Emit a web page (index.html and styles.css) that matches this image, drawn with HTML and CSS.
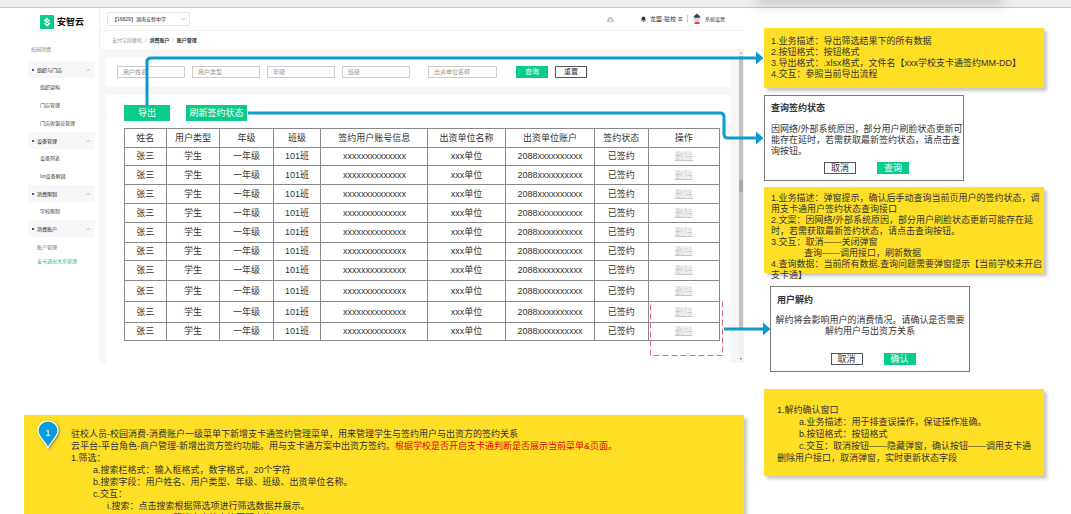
FILE: index.html
```html
<!DOCTYPE html>
<html lang="zh-CN">
<head>
<meta charset="utf-8">
<title>支卡通签约管理</title>
<link rel="stylesheet" href="styles.css">
</head>
<body>
<div class="topbar"><div class="topbar-float"></div></div>
<main class="canvas">
  <div class="left">
    <section class="app">
      <aside class="sidebar">
        <div class="brand">
          <svg class="brand-logo" viewBox="0 0 14 14"><rect width="14" height="14" rx="1" fill="#07cc8a"/><path d="M7.600 3 4.600 5.400 7.400 7.600M6.400 11.200l3-2.600L6.600 6.200M7.200 4.600l2.400 1.200M6.800 9.600 4.400 8.400" fill="none" stroke="#fff" stroke-width="1.300"/></svg>
          <strong>安智云</strong>
        </div>
        <div class="side-title">校园消费</div>
        <nav class="menu">
          <button class="group" type="button"><i></i>组织与门店<svg viewBox="0 0 6 4"><path d="M1 3l2-2 2 2"/></svg></button>
          <a href="#">组织架构</a>
          <a href="#">门店管理</a>
          <a href="#">门店收银员管理</a>
          <button class="group" type="button"><i></i>设备管理<svg viewBox="0 0 6 4"><path d="M1 3l2-2 2 2"/></svg></button>
          <a href="#">设备列表</a>
          <a href="#">Iot设备解绑</a>
          <button class="group" type="button"><i></i>消费限制<svg viewBox="0 0 6 4"><path d="M1 3l2-2 2 2"/></svg></button>
          <a href="#">学校限制</a>
          <button class="group" type="button"><i></i>消费账户<svg viewBox="0 0 6 4"><path d="M1 3l2-2 2 2"/></svg></button>
          <a class="sub" href="#">账户管理</a>
          <a class="sub current" href="#">支卡通出关系管理</a>
        </nav>
      </aside>
      <div class="main">
        <header class="header">
          <div class="school">
            <select aria-label="学校"><option>【16829】湖南安智中学</option></select>
            <svg viewBox="0 0 6 4"><path d="M1 1l2 2 2-2"/></svg>
          </div>
          <svg class="cloud" viewBox="0 0 9 7"><path d="M2.2 6.2a1.8 1.8 0 0 1-.2-3.5 2.6 2.6 0 0 1 5 0 1.8 1.8 0 0 1-.2 3.5z" fill="#c8c8c8"/><path d="M4.500 6V3.200M3.400 4.200l1.100-1.100 1.100 1.100" fill="none" stroke="#fff" stroke-width=".7"/></svg>
          <svg class="bell" viewBox="0 0 5 6"><path d="M0 4.6 .7 3.6V2.2a1.8 1.8 0 0 1 3.6 0v1.4L5 4.6zM1.8 5h1.4v.8H1.8z" fill="#333"/></svg>
          <span class="user">龙盟-驻校</span>
          <svg class="lines" viewBox="0 0 5 5"><path d="M0 .7h5M0 2.5h4M0 4.4h5" stroke="#444" stroke-width=".9"/></svg>
          <i class="sep"></i>
          <svg class="avatar" viewBox="0 0 10 12"><circle cx="5" cy="6" r="5" fill="#e4f1fb"/><circle cx="5" cy="5.500" r="2.600" fill="#f7c9b0"/><path d="M1.800 3.500 5 .6l3.200 2.900-.5 1.300H2.300z" fill="#28417a"/><path d="M2.200 11c0-3.400 5.600-3.400 5.600 0z" fill="#e0434b"/></svg>
          <span>系统设置</span>
        </header>
        <div class="crumbs"><span>支付宝团餐机</span><b>/</b><strong>消费账户</strong><b>/</b><strong>账户管理</strong></div>
        <div class="content">
          <div class="panels">
            <form class="filters">
              <input type="text" aria-label="用户姓名" placeholder="用户姓名">
              <input type="text" aria-label="用户类型" placeholder="用户类型">
              <input type="text" aria-label="年级" placeholder="年级">
              <input type="text" aria-label="班级" placeholder="班级">
              <input class="payer" type="text" aria-label="出资单位名称" placeholder="出资单位名称">
              <button class="btn primary search" type="button">查询</button>
              <button class="btn plain" type="button">重置</button>
            </form>
            <div class="list">
              <div class="actions">
                <button class="btn primary export" type="button">导出</button>
                <button class="btn primary refresh" type="button">刷新签约状态</button>
              </div>
              <table>
                <colgroup><col class="c1"><col class="c2"><col class="c3"><col class="c4"><col class="c5"><col class="c6"><col class="c7"><col class="c8"><col class="c9"></colgroup>
                <thead><tr><th>姓名</th><th>用户类型</th><th>年级</th><th>班级</th><th>签约用户账号信息</th><th>出资单位名称</th><th>出资单位账户</th><th>签约状态</th><th>操作</th></tr></thead>
                <tbody>
                  <tr class="low"><td>张三</td><td>学生</td><td>一年级</td><td>101班</td><td>xxxxxxxxxxxxxx</td><td>xxx单位</td><td>2088xxxxxxxxxx</td><td>已签约</td><td><a href="#">删除</a></td></tr>
                  <tr><td>张三</td><td>学生</td><td>一年级</td><td>101班</td><td>xxxxxxxxxxxxxx</td><td>xxx单位</td><td>2088xxxxxxxxxx</td><td>已签约</td><td><a href="#">删除</a></td></tr>
                  <tr><td>张三</td><td>学生</td><td>一年级</td><td>101班</td><td>xxxxxxxxxxxxxx</td><td>xxx单位</td><td>2088xxxxxxxxxx</td><td>已签约</td><td><a href="#">删除</a></td></tr>
                  <tr><td>张三</td><td>学生</td><td>一年级</td><td>101班</td><td>xxxxxxxxxxxxxx</td><td>xxx单位</td><td>2088xxxxxxxxxx</td><td>已签约</td><td><a href="#">删除</a></td></tr>
                  <tr class="mid"><td>张三</td><td>学生</td><td>一年级</td><td>101班</td><td>xxxxxxxxxxxxxx</td><td>xxx单位</td><td>2088xxxxxxxxxx</td><td>已签约</td><td><a href="#">删除</a></td></tr>
                  <tr class="low"><td>张三</td><td>学生</td><td>一年级</td><td>101班</td><td>xxxxxxxxxxxxxx</td><td>xxx单位</td><td>2088xxxxxxxxxx</td><td>已签约</td><td><a href="#">删除</a></td></tr>
                  <tr class="mid"><td>张三</td><td>学生</td><td>一年级</td><td>101班</td><td>xxxxxxxxxxxxxx</td><td>xxx单位</td><td>2088xxxxxxxxxx</td><td>已签约</td><td><a href="#">删除</a></td></tr>
                  <tr class="tall"><td>张三</td><td>学生</td><td>一年级</td><td>101班</td><td>xxxxxxxxxxxxxx</td><td>xxx单位</td><td>2088xxxxxxxxxx</td><td>已签约</td><td><a href="#">删除</a></td></tr>
                  <tr class="tall"><td>张三</td><td>学生</td><td>一年级</td><td>101班</td><td>xxxxxxxxxxxxxx</td><td>xxx单位</td><td>2088xxxxxxxxxx</td><td>已签约</td><td><a href="#">删除</a></td></tr>
                  <tr class="low"><td>张三</td><td>学生</td><td>一年级</td><td>101班</td><td>xxxxxxxxxxxxxx</td><td>xxx单位</td><td>2088xxxxxxxxxx</td><td>已签约</td><td><a href="#">删除</a></td></tr>
                </tbody>
              </table>
            </div>
          </div>
          <div class="scrollbar"><i class="up"></i><div class="thumb"><div class="grip"></div></div><i class="down"></i></div>
        </div>
      </div>
    </section>
    <section class="note summary">
      <svg class="pin" viewBox="0 0 24 30"><path d="M12 28C9 21 2 17 2 10.500A10 9.500 0 0 1 22 10.500C22 17 15 21 12 28z" fill="#0a9bd8" stroke="#fff" stroke-width="1.200"/><text x="12" y="16" text-anchor="middle">1</text></svg>
      <div class="summary-text">
        <p>驻校人员-校园消费-消费账户一级菜单下新增支卡通签约管理菜单，用来管理学生与签约用户与出资方的签约关系</p>
        <p>云平台-平台角色-商户管理-新增出资方签约功能。用与支卡通方案中出资方签约。<em>根据学校是否开启支卡通判断是否展示当前菜单&amp;页面。</em></p>
        <p>1.筛选：</p>
        <p class="in1">a.搜索栏格式：输入框格式，数字格式，20个字符</p>
        <p class="in1">b.搜索字段：用户姓名、用户类型、年级、班级、出资单位名称。</p>
        <p class="in1">c.交互：</p>
        <p class="in2">i.搜索：点击搜索根据筛选项进行筛选数据并展示。</p>
        <p class="in3">筛选内容按字符匹配查询</p>
      </div>
    </section>
  </div>
  <div class="right">
    <section class="note n1">
      <p>1.业务描述：导出筛选结果下的所有数据</p>
      <p>2.按钮格式：按钮格式</p>
      <p>3.导出格式：.xlsx格式，文件名【xxx学校支卡通签约MM-DD】</p>
      <p>4.交互：参照当前导出流程</p>
    </section>
    <section class="dialog d1">
      <h2>查询签约状态</h2>
      <p>因网络/外部系统原因，部分用户刷脸状态更新可能存在延时，若需获取最新签约状态，请点击查询按钮。</p>
      <div class="dialog-actions"><button class="btn plain" type="button">取消</button><button class="btn primary" type="button">查询</button></div>
    </section>
    <section class="note n2">
      <p>1.业务描述：弹窗提示，确认后手动查询当前页用户的签约状态，调用支卡通用户签约状态查询接口</p>
      <p>2.文案：因网络/外部系统原因，部分用户刷脸状态更新可能存在延<br>时，若需获取最新签约状态，请点击查询按钮。</p>
      <p>3.交互：取消——关闭弹窗</p>
      <p class="deep">查询——调用接口，刷新数据</p>
      <p>4.查询数据：当前所有数据.查询问题需要弹窗提示【当前学校未开启支卡通】</p>
    </section>
    <section class="dialog d2">
      <h2>用户解约</h2>
      <p>解约将会影响用户的消费情况。请确认是否需要解约用户与出资方关系</p>
      <div class="dialog-actions"><button class="btn plain" type="button">取消</button><button class="btn primary" type="button">确认</button></div>
    </section>
    <section class="note n3">
      <p>1.解约确认窗口</p>
      <p class="in1">a.业务描述：用于排查误操作，保证操作准确。</p>
      <p class="in1">b.按钮格式：按钮格式</p>
      <p class="hang">c.交互：取消按钮——隐藏弹窗，确认按钮——调用支卡通删除用户接口，取消弹窗，实时更新状态字段</p>
    </section>
  </div>
  <svg class="connectors" width="1071" height="506" viewBox="0 8 1071 506" aria-hidden="true">
    <g class="wire">
      <path d="M147 105V62q0-4 4-4H758"/>
      <path d="M248 113H720q4 0 4 4V134q0 4 4 4H758"/>
      <path d="M724 329H764"/>
    </g>
    <path class="head" d="M756 51.500 763.500 58 756 64.500zM756 131.500 763.500 138 756 144.500zM763 322.500 770.500 329 763 335.500z"/>
    <rect class="focus" x="650.500" y="301.500" width="72" height="54"/>
  </svg>
</main>
</body>
</html>
```
FILE: styles.css
```css
* { box-sizing: border-box; }
body {
  margin: 0;
  height: 100vh;
  display: flex;
  flex-direction: column;
  overflow: hidden;
  background: #fff;
  color: #333;
  font-family: "Liberation Sans", "Noto Sans CJK SC", sans-serif;
  font-size: 9px;
  line-height: 11px;
}
p, h2 { margin: 0; font-size: 9px; }
a { color: inherit; text-decoration: none; }
button, input, select { font: inherit; color: inherit; margin: 0; border-radius: 0; }

.topbar { flex: none; height: 8px; position: relative; background: #f0f0f0; border-bottom: 1px solid #c8c8c8; }
.topbar-float { position: absolute; right: 68px; top: -10px; width: 246px; height: 8px; box-shadow: 0 4px 14px 2px rgba(0, 0, 0, .2); }

.canvas {
  flex: 1;
  min-height: 0;
  position: relative;
  display: grid;
  grid-template-columns: minmax(0, 1fr) 280px;
  column-gap: 20px;
  padding-right: 27px;
}
.left { display: flex; flex-direction: column; min-height: 0; }

.app { display: flex; height: 355px; flex: none; margin-bottom: 52px; font-size: 5px; line-height: 8px; }
.sidebar { width: 99px; flex: none; padding: 7px 4px 0 28px; }
.brand { display: flex; align-items: center; gap: 3px; padding-left: 12px; height: 14px; font-size: 9px; color: #111; }
.brand-logo { width: 14px; height: 14px; }
.side-title { padding-left: 3px; margin: 16px 0 8px; color: #888; }
.menu { display: flex; flex-direction: column; }
.menu .group { display: flex; align-items: center; height: 17px; border: 0; padding: 0 4px; background: #f5f7f9; text-align: left; gap: 3px; color: #222; font-size: 5px; }
.group i { width: 2px; height: 2px; border-radius: 50%; background: #222; }
.group svg { width: 5px; height: 4px; margin-left: auto; }
.group path, .school path { fill: none; stroke: #999; stroke-width: .8; }
.menu a { height: 18px; padding-left: 12px; line-height: 18px; color: #444; }
.menu .sub { height: 14px; padding-left: 9px; line-height: 14px; color: #777; }
.menu .group + .sub { margin-top: 3px; }
.menu .current { color: #1dc28a; }

.main { flex: 1; min-width: 0; display: flex; flex-direction: column; }
.header { display: flex; align-items: center; height: 23px; border-bottom: 1px solid #f2f2f2; border-left: 1px solid #f2f2f2; padding: 0 19px 0 7px; }
.school { position: relative; margin-right: auto; }
.school select { display: block; appearance: none; width: 83px; height: 14px; padding: 0 4px; border: 1px solid #e6e6e6; border-radius: 2px; background: #fff; }
.school svg { position: absolute; right: 4px; top: 5px; width: 5px; height: 4px; }
.cloud { width: 9px; height: 7px; margin-right: 26px; }
.bell { width: 5px; height: 6px; margin-right: 4px; }
.user { font-size: 6px; }
.lines { width: 5px; height: 4px; margin: 0 4px 0 2px; }
.sep { width: 1px; height: 8px; background: #ccc; margin-right: 4px; }
.avatar { width: 10px; height: 12px; margin-right: 3px; }
.crumbs { display: flex; gap: 3px; height: 18px; line-height: 18px; padding-left: 12px; border-left: 1px solid #f2f2f2; color: #999; }
.crumbs strong { color: #333; }
.crumbs b { font-weight: 400; }

.content { flex: 1; display: flex; background: #f7f7f7; padding-left: 7px; gap: 8px; }
.panels { flex: 1; min-width: 0; display: flex; flex-direction: column; gap: 8px; padding-top: 8px; }
.filters { display: flex; align-items: center; gap: 7px; height: 30px; padding-left: 11px; background: #fff; }
.filters input { width: 68px; height: 12px; padding: 0 5px; border: 1px solid #ccc; font-size: 6px; background: #fff; }
.filters input::placeholder { color: #999; opacity: 1; }
.filters .payer { margin-left: 11px; width: 69px; }
.filters .btn { font-size: 7px; }
.filters .search { margin-left: 12px; }
.list { flex: 1; padding: 10px 10px 0 18px; background: #fff; font-size: 9px; }
.actions { display: flex; gap: 16px; margin-bottom: 7px; }

.btn { width: 32px; height: 12px; padding: 0; font-size: 9px; line-height: 10px; text-align: center; white-space: nowrap; }
.primary { border: 0; background: #07cc8a; color: #fff; }
.plain { border: 1px solid #555; background: #fff; }
.export { width: 46px; height: 16px; }
.refresh { width: 61px; height: 16px; }

table { width: 100%; table-layout: fixed; border-collapse: collapse; }
th, td { border: 1px solid #888; padding: 0; font-weight: 400; text-align: center; line-height: 11px; white-space: nowrap; }
tr { height: 19px; }
.low { height: 18px; }
.mid { height: 20px; }
.tall { height: 21px; }
td a { color: #c8c8c8; text-decoration: underline; }
.c1 { width: 7%; }
.c2 { width: 9%; }
.c3 { width: 9%; }
.c4 { width: 8%; }
.c5 { width: 18%; }
.c6 { width: 13%; }
.c7 { width: 15%; }
.c8 { width: 9%; }
.c9 { width: 12%; }

.scrollbar { width: 6px; display: flex; flex-direction: column; align-items: center; background: #f1f1f1; padding: 2px 0; }
.scrollbar .up { border: 1px solid transparent; border-bottom: 2px solid #999; }
.scrollbar .down { border: 1px solid transparent; border-top: 2px solid #666; margin-top: auto; }
.thumb { width: 4px; height: 273px; margin-top: 2px; padding-top: 124px; background: #c1c1c1; }
.grip { height: 12px; background: #a8a8a8; }

.note { background: #ffdf25; box-shadow: 3px 3px 3px rgba(0, 0, 0, .22); }
.in1 { padding-left: 22px; }
.in2 { padding-left: 36px; }
.in3 { padding-left: 102px; }
.summary { flex: 1; min-height: 0; margin-left: 24px; padding: 13px 12px 0; display: flex; align-items: flex-start; gap: 11px; line-height: 12px; }
.summary em { font-style: normal; color: #e60012; }
.summary-text { white-space: nowrap; }
.pin { flex: none; width: 24px; height: 30px; margin-top: -8px; filter: drop-shadow(1px 1px 1px rgba(0, 0, 0, .4)); }
.pin text { fill: #fff; font-size: 9px; }

.right { display: flex; flex-direction: column; align-items: flex-start; padding-top: 20px; }
.right > * { flex: none; }
.right .note { width: 100%; }
.n1 { height: 60px; padding: 8px 7px; margin-bottom: 7px; }
.n2 { height: 86px; padding: 6px 1px 0 7px; margin-bottom: 13px; }
.n2 .deep { padding-left: 33px; }
.n3 { padding: 15px 7px 12px 13px; margin-top: 17px; line-height: 12px; }
.hang { text-indent: 22px; }
.dialog { width: 200px; border: 1px solid #797979; background: #fff; }
.dialog-actions { display: flex; }
.d1 { height: 86px; padding: 7px 0 0 6px; margin-bottom: 6px; }
.d1 h2 { margin-bottom: 10px; }
.d1 .dialog-actions { gap: 21px; padding: 5px 0 0 53px; }
.d2 { height: 86px; padding: 8px 4px 0; margin-left: 6px; }
.d2 h2 { margin: 0 0 9px 2px; }
.d2 p { text-align: center; }
.d2 .dialog-actions { justify-content: center; gap: 21px; padding: 16px 0 0 6px; }

.connectors { position: absolute; left: 0; top: 0; pointer-events: none; }
.wire { fill: none; stroke: #0c9bd0; stroke-width: 3; }
.head { fill: #0c9bd0; }
.focus { fill: none; stroke: #e8677a; stroke-dasharray: 6 3; }
```
